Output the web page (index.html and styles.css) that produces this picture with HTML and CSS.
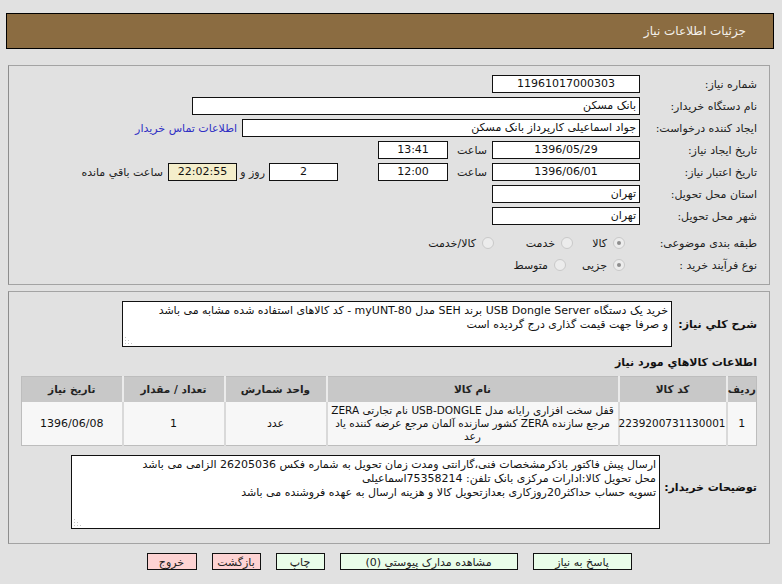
FILE: index.html
```html
<!DOCTYPE html>
<html lang="fa" dir="rtl">
<head>
<meta charset="utf-8">
<title>جزئیات اطلاعات نیاز</title>
<link rel="stylesheet" href="styles.css">
</head>
<body>
<div class="page">
  <div class="header"><span>جزئیات اطلاعات نیاز</span></div>

  <div class="panel p1">
    <div class="row">
      <div class="lbl">شماره نیاز:</div>
      <div class="field w148 center">11961017000303</div>
    </div>
    <div class="row">
      <div class="lbl">نام دستگاه خریدار:</div>
      <div class="field w448">بانک مسکن</div>
    </div>
    <div class="row">
      <div class="lbl">ایجاد کننده درخواست:</div>
      <div class="field w398">جواد اسماعیلی کارپرداز بانک مسکن</div>
      <a class="link" href="#">اطلاعات تماس خریدار</a>
    </div>
    <div class="row">
      <div class="lbl">تاریخ ایجاد نیاز:</div>
      <div class="field w148 center">1396/05/29</div>
      <div class="txt hour">ساعت</div>
      <div class="field w70 center">13:41</div>
    </div>
    <div class="row">
      <div class="lbl">تاریخ اعتبار نیاز:</div>
      <div class="field w148 center">1396/06/01</div>
      <div class="txt hour">ساعت</div>
      <div class="field w70 center">12:00</div>
      <div class="field w69 center days">2</div>
      <div class="txt dayand">روز و</div>
      <div class="field w69 center remain">22:02:55</div>
      <div class="txt left">ساعت باقي مانده</div>
    </div>
    <div class="row">
      <div class="lbl">استان محل تحویل:</div>
      <div class="field w148">تهران</div>
    </div>
    <div class="row">
      <div class="lbl">شهر محل تحویل:</div>
      <div class="field w148">تهران</div>
    </div>
    <div class="row radios r1">
      <div class="lbl">طبقه بندی موضوعی:</div>
      <div class="opt o1"><span class="radio checked"></span><span>کالا</span></div>
      <div class="opt o2"><span class="radio"></span><span>خدمت</span></div>
      <div class="opt"><span class="radio"></span><span>کالا/خدمت</span></div>
    </div>
    <div class="row radios r2">
      <div class="lbl">نوع فرآیند خرید :</div>
      <div class="opt o3"><span class="radio checked"></span><span>جزیی</span></div>
      <div class="opt"><span class="radio"></span><span>متوسط</span></div>
    </div>
  </div>

  <div class="panel p2">
    <div class="area-row desc-row">
      <div class="blbl desc-lbl">شرح کلي نیاز:</div>
      <div class="area desc">
        <div class="line">خرید یک دستگاه USB Dongle Server برند SEH مدل myUNT-80 - کد کالاهای استفاده شده مشابه می باشد</div>
        <div class="line">و صرفا جهت قیمت گذاری درج گردیده است</div>
        <svg class="grip" width="7" height="7" viewBox="0 0 7 7"><g fill="#c4c4c4"><rect x="0" y="0" width="1" height="1"/><rect x="0" y="3" width="1" height="1"/><rect x="3" y="3" width="1" height="1"/><rect x="0" y="6" width="1" height="1"/><rect x="3" y="6" width="1" height="1"/><rect x="6" y="6" width="1" height="1"/></g></svg>
      </div>
    </div>

    <div class="section-title">اطلاعات کالاهاي مورد نیاز</div>

    <table class="items">
      <thead>
        <tr>
          <th class="c1">ردیف</th>
          <th class="c2">کد کالا</th>
          <th class="c3">نام کالا</th>
          <th class="c4">واحد شمارش</th>
          <th class="c5">تعداد / مقدار</th>
          <th class="c6">تاریخ نیاز</th>
        </tr>
      </thead>
      <tbody>
        <tr>
          <td>1</td>
          <td class="code">2239200731130001</td>
          <td class="name">قفل سخت افزاری رایانه مدل USB-DONGLE نام تجارتی ZERA مرجع سازنده ZERA کشور سازنده آلمان مرجع عرضه کننده یاد رعد</td>
          <td>عدد</td>
          <td>1</td>
          <td>1396/06/08</td>
        </tr>
      </tbody>
    </table>

    <div class="area-row notes-row">
      <div class="blbl notes-lbl">توضیحات خریدار:</div>
      <div class="area notes">
        <div class="line">ارسال پیش فاکتور باذکرمشخصات فنی،گارانتی ومدت زمان تحویل به شماره فکس 26205036 الزامی می باشد</div>
        <div class="line">محل تحویل کالا:ادارات مرکزی بانک تلفن: 75358214اسماعیلی</div>
        <div class="line">تسویه حساب حداکثر20روزکاری بعدازتحویل کالا و هزینه ارسال به عهده فروشنده می باشد</div>
        <svg class="grip" width="7" height="7" viewBox="0 0 7 7"><g fill="#c4c4c4"><rect x="0" y="0" width="1" height="1"/><rect x="0" y="3" width="1" height="1"/><rect x="3" y="3" width="1" height="1"/><rect x="0" y="6" width="1" height="1"/><rect x="3" y="6" width="1" height="1"/><rect x="6" y="6" width="1" height="1"/></g></svg>
      </div>
    </div>
  </div>

  <div class="buttons">
    <button class="btn green b1">پاسخ به نیاز</button>
    <button class="btn green b2">مشاهده مدارک پیوستي (0)</button>
    <button class="btn green b3">چاپ</button>
    <button class="btn pink b4">بازگشت</button>
    <button class="btn pink b5">خروج</button>
  </div>
</div>
</body>
</html>
```

FILE: styles.css
```css
* { box-sizing: border-box; }

body {
  margin: 0;
  background: #e1e1e1;
  font-family: Tahoma, "DejaVu Sans", sans-serif;
  font-size: 11px;
  color: #1a1a1a;
  direction: rtl;
}

.page {
  padding-top: 13px;
}

.header {
  margin: 0 8px 0 6px;
  height: 36px;
  border: 1px solid #000;
  background: #8b6c41;
  color: #f4f0ea;
  font-size: 12px;
  display: flex;
  align-items: center;
  padding-right: 27px;
}

.panel {
  margin: 16px 12px 0 8px;
  border: 1px solid #a3a3a3;
  border-left-color: #8d8d8d;
}

.p1 {
  padding: 9px 0 10px 0;
}

.p2 {
  margin-top: 6px;
  padding: 9px 0 14px 0;
}

.row {
  display: flex;
  align-items: center;
  height: 18px;
  margin-bottom: 4px;
}

.row.r1 { margin-top: 9px; }
.row.r2 { margin-bottom: 0; }

.lbl {
  flex: none;
  width: 129px;
  padding-right: 12px;
  color: #222;
  white-space: nowrap;
}

.field {
  flex: none;
  height: 18px;
  border: 1px solid #111;
  background: #fff;
  padding: 0 3px;
  line-height: 16px;
  white-space: nowrap;
  overflow: hidden;
  color: #111;
}

.w148 { width: 148px; }
.w448 { width: 448px; }
.w398 { width: 398px; }
.w70 { width: 70px; }
.w69 { width: 69px; }
.center { text-align: center; }

.txt { flex: none; white-space: nowrap; color: #222; }
.hour { width: 44px; padding-right: 5px; }
.days { margin-right: 40px; }
.dayand { width: 32px; padding-right: 4px; }
.remain { background: #f4eecb; }
.left { padding-right: 5px; }

.link {
  margin-right: 5px;
  color: #2f2fc4;
  text-decoration: none;
  white-space: nowrap;
}

.opt {
  flex: none;
  display: flex;
  align-items: center;
  gap: 6px;
  white-space: nowrap;
}
.o1 { width: 67px; padding-right: 15px; }
.o2 { width: 79px; }
.o3 { width: 74px; padding-right: 15px; }

.radio {
  width: 12px;
  height: 12px;
  border-radius: 50%;
  border: 1px solid #c9c9c9;
  background: #ececec;
  display: inline-flex;
  align-items: center;
  justify-content: center;
  flex: none;
}
.radio.checked::after {
  content: "";
  width: 4px;
  height: 4px;
  border-radius: 50%;
  background: #8e8e8e;
}

.area-row {
  display: flex;
  align-items: center;
}

.blbl {
  flex: none;
  padding-right: 12px;
  font-weight: bold;
  font-size: 11px;
  color: #111;
  white-space: nowrap;
}
.desc-lbl { width: 97px; }
.notes-lbl { width: 109px; }

.area {
  flex: none;
  position: relative;
  background: #fff;
  border: 1px solid #111;
  padding: 2px 3px;
  line-height: 14px;
  color: #111;
  overflow: hidden;
}
.area .line { white-space: nowrap; }
.desc { width: 550px; height: 46px; }
.notes { width: 589px; height: 74px; margin-top: 9px; }

.grip {
  position: absolute;
  left: 2px;
  bottom: 2px;
}

.section-title {
  margin-top: 8px;
  height: 16px;
  line-height: 16px;
  padding-right: 12px;
  font-weight: bold;
  font-size: 11px;
  color: #111;
}

.items {
  margin: 5px 12px 0 0;
  width: 735px;
  border-collapse: collapse;
  border: 1px solid #bdbdbd;
  table-layout: fixed;
}
.items th {
  height: 25px;
  background: #c8c8c8;
  font-weight: bold;
  font-size: 10.5px;
  color: #222;
  border-left: 2px solid #ebebeb;
  padding: 0;
  white-space: nowrap;
}
.items th:last-child { border-left: none; }
.items td {
  height: 44px;
  background: #f7f7f7;
  border-left: 2px solid #d9d9d9;
  text-align: center;
  padding: 0 2px;
  line-height: 13px;
  color: #111;
}
.items td:last-child { border-left: none; }
.items td.name { padding: 0 3px; font-size: 10.5px; }
.items td.code { font-size: 10.5px; padding: 0; }
.c1 { width: 30px; }
.c2 { width: 108px; }
.c3 { width: 292px; }
.c4 { width: 102px; }
.c5 { width: 102px; }
.c6 { width: 101px; }

.buttons {
  margin: 9px 12px 0 8px;
  display: flex;
  justify-content: center;
  gap: 15px;
}

.btn {
  height: 17px;
  border: 1px solid #111;
  font-family: Tahoma, "DejaVu Sans", sans-serif;
  font-size: 11px;
  color: #222;
  padding: 2px 0 0 0;
  line-height: 13px;
}
.green { background: #e9fde9; }
.pink { background: #fdd3d3; }
.b1 { width: 99px; }
.b2 { width: 178px; }
.b3 { width: 49px; }
.b4 { width: 49px; }
.b5 { width: 50px; }
```
